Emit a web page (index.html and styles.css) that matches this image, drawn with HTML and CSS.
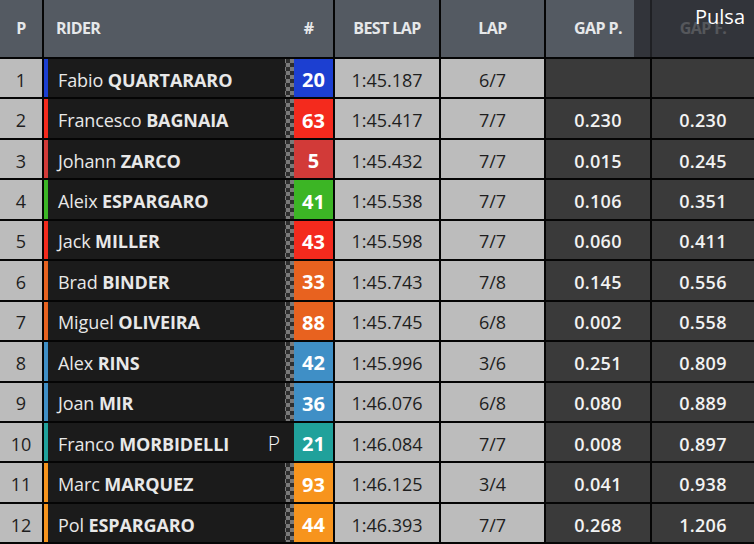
FILE: index.html
```html
<!DOCTYPE html>
<html lang="es">
<head>
<meta charset="utf-8">
<title>Clasificación</title>
<link rel="stylesheet" href="styles.css">
</head>
<body>
<div class="board">
  <div class="h pos">P</div>
  <div class="h rider-h"><span class="rh-name">RIDER</span><span class="rh-num">#</span></div>
  <div class="h">BEST LAP</div>
  <div class="h">LAP</div>
  <div class="h">GAP P.</div>
  <div class="h">GAP F.</div>

  <div class="c pos">1</div>
  <div class="rider t-yam"><span class="bar"></span><span class="name">Fabio&nbsp;<b>QUARTARARO</b></span><span class="chk"></span><span class="num">20</span></div>
  <div class="c">1:45.187</div><div class="c">6/7</div><div class="g"></div><div class="g"></div>

  <div class="c pos">2</div>
  <div class="rider t-duc"><span class="bar"></span><span class="name">Francesco&nbsp;<b>BAGNAIA</b></span><span class="chk"></span><span class="num">63</span></div>
  <div class="c">1:45.417</div><div class="c">7/7</div><div class="g">0.230</div><div class="g">0.230</div>

  <div class="c pos">3</div>
  <div class="rider t-pra"><span class="bar"></span><span class="name">Johann&nbsp;<b>ZARCO</b></span><span class="chk"></span><span class="num">5</span></div>
  <div class="c">1:45.432</div><div class="c">7/7</div><div class="g">0.015</div><div class="g">0.245</div>

  <div class="c pos">4</div>
  <div class="rider t-apr"><span class="bar"></span><span class="name">Aleix&nbsp;<b>ESPARGARO</b></span><span class="chk"></span><span class="num">41</span></div>
  <div class="c">1:45.538</div><div class="c">7/7</div><div class="g">0.106</div><div class="g">0.351</div>

  <div class="c pos">5</div>
  <div class="rider t-duc"><span class="bar"></span><span class="name">Jack&nbsp;<b>MILLER</b></span><span class="chk"></span><span class="num">43</span></div>
  <div class="c">1:45.598</div><div class="c">7/7</div><div class="g">0.060</div><div class="g">0.411</div>

  <div class="c pos">6</div>
  <div class="rider t-ktm"><span class="bar"></span><span class="name">Brad&nbsp;<b>BINDER</b></span><span class="chk"></span><span class="num">33</span></div>
  <div class="c">1:45.743</div><div class="c">7/8</div><div class="g">0.145</div><div class="g">0.556</div>

  <div class="c pos">7</div>
  <div class="rider t-ktm"><span class="bar"></span><span class="name">Miguel&nbsp;<b>OLIVEIRA</b></span><span class="chk"></span><span class="num">88</span></div>
  <div class="c">1:45.745</div><div class="c">6/8</div><div class="g">0.002</div><div class="g">0.558</div>

  <div class="c pos">8</div>
  <div class="rider t-suz"><span class="bar"></span><span class="name">Alex&nbsp;<b>RINS</b></span><span class="chk"></span><span class="num">42</span></div>
  <div class="c">1:45.996</div><div class="c">3/6</div><div class="g">0.251</div><div class="g">0.809</div>

  <div class="c pos">9</div>
  <div class="rider t-suz"><span class="bar"></span><span class="name">Joan&nbsp;<b>MIR</b></span><span class="chk"></span><span class="num">36</span></div>
  <div class="c">1:46.076</div><div class="c">6/8</div><div class="g">0.080</div><div class="g">0.889</div>

  <div class="c pos">10</div>
  <div class="rider t-pet"><span class="bar"></span><span class="name">Franco&nbsp;<b>MORBIDELLI</b></span><span class="pit">P</span><span class="num">21</span></div>
  <div class="c">1:46.084</div><div class="c">7/7</div><div class="g">0.008</div><div class="g">0.897</div>

  <div class="c pos">11</div>
  <div class="rider t-hon"><span class="bar"></span><span class="name">Marc&nbsp;<b>MARQUEZ</b></span><span class="chk"></span><span class="num">93</span></div>
  <div class="c">1:46.125</div><div class="c">3/4</div><div class="g">0.041</div><div class="g">0.938</div>

  <div class="c pos">12</div>
  <div class="rider t-hon"><span class="bar"></span><span class="name">Pol&nbsp;<b>ESPARGARO</b></span><span class="chk"></span><span class="num">44</span></div>
  <div class="c">1:46.393</div><div class="c">7/7</div><div class="g">0.268</div><div class="g">1.206</div>

  <div class="hint">Pulsa</div>
</div>
</body>
</html>
```

FILE: styles.css
```css
html, body {
  margin: 0;
  padding: 0;
  background: #000;
  overflow: hidden;
}

.board {
  position: relative;
  width: 754px;
  height: 544px;
  overflow: hidden;
  display: grid;
  grid-template-columns: 42px 289px 104px 103px 104px 1fr;
  grid-template-rows: 57px repeat(12, 38.45px);
  gap: 2px;
  background: #050505;
  font-family: "Open Sans", "Noto Sans", sans-serif;
}

.h {
  background: #545a62;
  color: #e6e8ea;
  font-weight: 700;
  font-size: 16px;
  letter-spacing: -0.6px;
  display: flex;
  align-items: center;
  justify-content: center;
  padding-bottom: 1px;
}

.rider-h {
  justify-content: space-between;
  padding-left: 12px;
}

.rh-num {
  width: 39px;
  padding-right: 5px;
  text-align: center;
}

.c {
  background: #bcbcbc;
  color: #1e1e1e;
  font-size: 18px;
  display: flex;
  align-items: center;
  justify-content: center;
  padding-top: 3px;
}

.g {
  background: #3a3a3a;
  color: #f2f2f2;
  font-size: 18px;
  font-weight: 600;
  letter-spacing: 0.3px;
  display: flex;
  align-items: center;
  justify-content: center;
  padding-top: 3px;
}

.rider {
  background: #1b1b1b;
  display: flex;
  align-items: stretch;
}

.bar {
  width: 4px;
  background: var(--team);
}

.name {
  flex: 1;
  display: flex;
  align-items: center;
  padding-left: 10px;
  padding-top: 3px;
  color: #e8e8e8;
  font-size: 18px;
  letter-spacing: -0.1px;
  white-space: nowrap;
}

.name b {
  font-weight: 700;
}

.chk {
  width: 9px;
  background-color: #2a2a2a;
  background-image: repeating-conic-gradient(#7a7a7a 0 25%, #2e2e2e 0 50%);
  background-size: 8px 8px;
  background-position: 1px 0;
}

.pit {
  display: flex;
  align-items: center;
  padding-top: 2px;
  color: #f4f4f4;
  font-size: 21px;
  font-weight: 300;
  margin-right: 14px;
}

.num {
  width: 39px;
  background: var(--team);
  color: #fff;
  font-weight: 700;
  font-size: 20px;
  display: flex;
  align-items: center;
  justify-content: center;
  padding-top: 3px;
}

.t-yam { --team: #1c3fd1; }
.t-duc { --team: #f42a1d; }
.t-pra { --team: #d23a38; }
.t-apr { --team: #3cb525; }
.t-ktm { --team: #e8621f; }
.t-suz { --team: #3f8fc6; }
.t-pet { --team: #20a19b; }
.t-hon { --team: #f7941d; }

.hint {
  position: absolute;
  top: 0;
  right: 0;
  width: 120px;
  height: 57px;
  box-sizing: border-box;
  padding: 3px 9px 0 0;
  text-align: right;
  background: rgba(39, 41, 46, 0.76);
  color: #fff;
  font-size: 20px;
}
```
